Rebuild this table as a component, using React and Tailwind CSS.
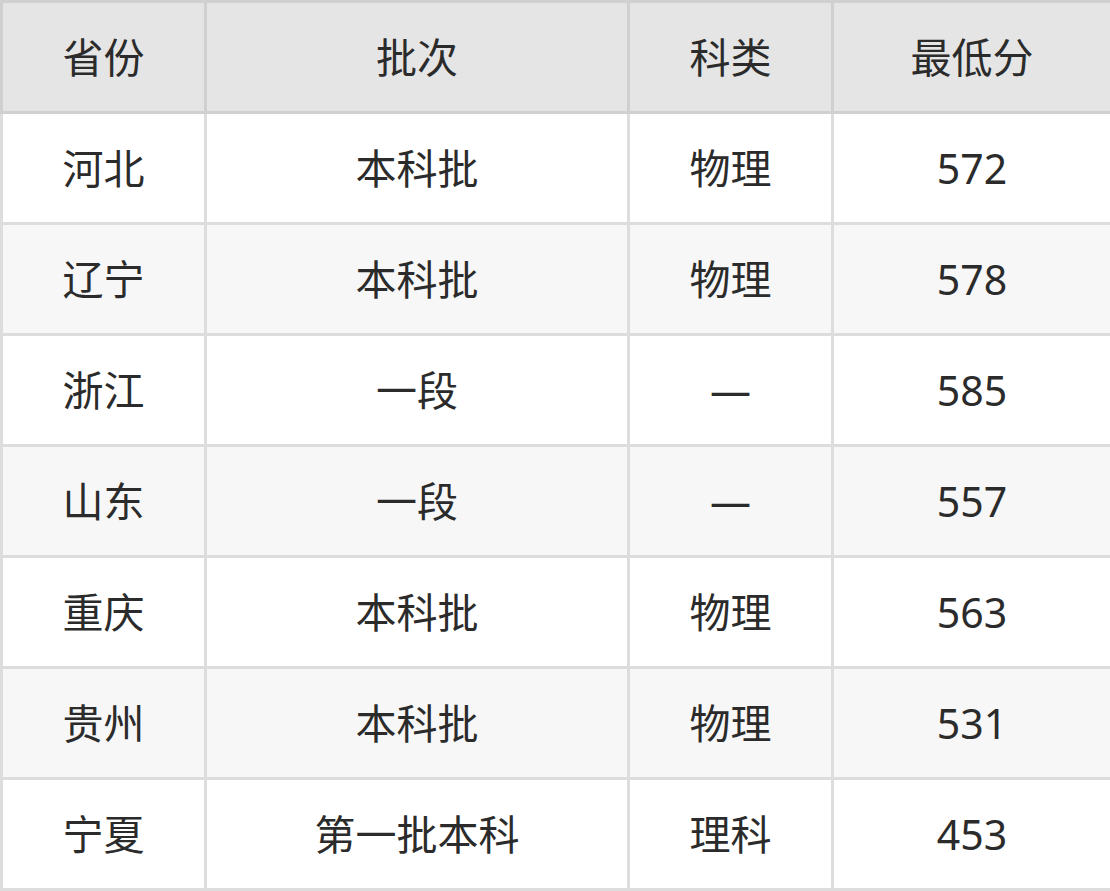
const rows = [
  ["河北", "本科批", "物理", "572"],
  ["辽宁", "本科批", "物理", "578"],
  ["浙江", "一段", "—", "585"],
  ["山东", "一段", "—", "557"],
  ["重庆", "本科批", "物理", "563"],
  ["贵州", "本科批", "物理", "531"],
  ["宁夏", "第一批本科", "理科", "453"],
];

export default function App() {
  return (
    <div className="w-[1110px] h-[891px] bg-white font-['Noto_Sans','Noto_Sans_CJK_SC',sans-serif] text-[#2b2b2b]">
      <table className="border-collapse table-fixed w-[1110px] text-[41px] leading-none">
        <colgroup>
          <col className="w-[204px]" />
          <col className="w-[423px]" />
          <col className="w-[204px]" />
          <col className="w-[279px]" />
        </colgroup>
        <thead>
          <tr className="h-[111px] bg-[#e5e5e5]">
            {["省份", "批次", "科类", "最低分"].map((h) => (
              <th
                key={h}
                className="border-[3px] border-[#d0d0d0] text-center font-normal p-0"
              >
                {h}
              </th>
            ))}
          </tr>
        </thead>
        <tbody>
          {rows.map((r, i) => (
            <tr
              key={r[0]}
              className={`h-[111px] ${i % 2 === 1 ? "bg-[#f7f7f7]" : "bg-white"}`}
            >
              {r.map((c, j) => (
                <td
                  key={j}
                  className="border-[3px] border-[#dddddd] text-center p-0"
                >
                  {c}
                </td>
              ))}
            </tr>
          ))}
        </tbody>
      </table>
    </div>
  );
}
